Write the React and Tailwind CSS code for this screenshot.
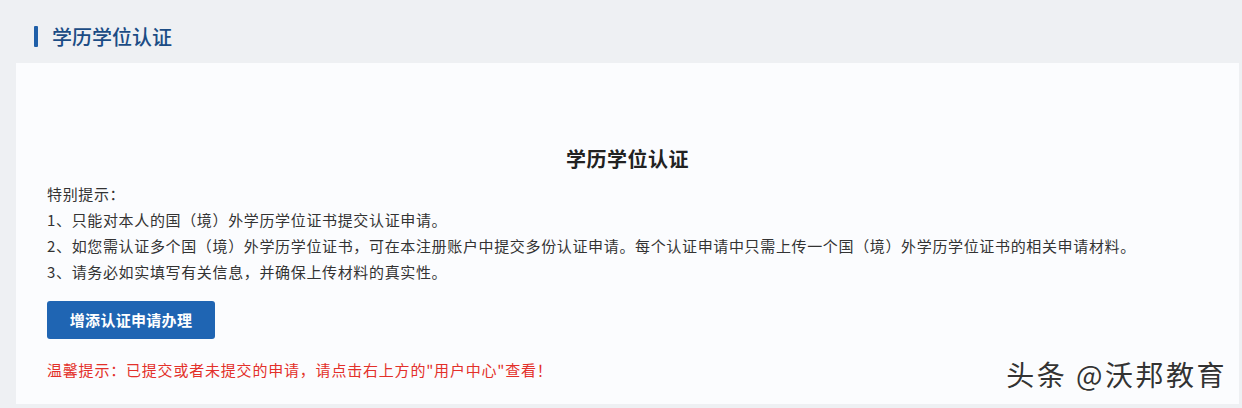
import React from "react";

const tips = [
  "1、只能对本人的国（境）外学历学位证书提交认证申请。",
  "2、如您需认证多个国（境）外学历学位证书，可在本注册账户中提交多份认证申请。每个认证申请中只需上传一个国（境）外学历学位证书的相关申请材料。",
  "3、请务必如实填写有关信息，并确保上传材料的真实性。",
];

export default function App() {
  return (
    <div
      className="w-[1242px] h-[408px] overflow-hidden bg-[#eef0f3] flex flex-col"
      style={{ fontFamily: '"Noto Sans CJK SC", "Noto Sans", sans-serif' }}
    >
      {/* header */}
      <div className="h-[63px] shrink-0 flex items-center pl-[34px] pt-[10px]">
        <div className="w-[4px] h-[21px] bg-[#1f5fa8] rounded-[1px]" />
        <div className="ml-[14px] text-[20px] leading-none font-medium text-[#1b4c85]">学历学位认证</div>
      </div>

      {/* card */}
      <div className="ml-[16px] w-[1223px] h-[341px] bg-[#fbfcfe] relative pt-[84px] pl-[31px]">
        <div className="absolute left-0 right-0 top-[83px] text-center text-[20px] leading-[26px] font-bold text-[#222] tracking-[0.5px]">
          学历学位认证
        </div>
        <div className="mt-[34px] text-[15px] leading-[26px] tracking-[0.65px] text-[#333]">
          <div>特别提示：</div>
          {tips.map((t) => (
            <div key={t}>{t}</div>
          ))}
        </div>
        <button className="mt-[16px] w-[168px] h-[38px] rounded-[3px] bg-[#1f65b3] text-white text-[15px] font-bold tracking-[0.3px]">
          增添认证申请办理
        </button>
        <div className="mt-[18px] text-[15px] leading-[26px] tracking-[0.8px] text-[#e3302a]">
          温馨提示：已提交或者未提交的申请，请点击右上方的"用户中心"查看！
        </div>

        {/* watermark */}
        <div
          className="absolute right-[12px] top-[293px] text-[28px] leading-[36px] text-[#333] tracking-[2.5px]"
          style={{ textShadow: "1px 1px 0 #fff, -1px -1px 0 #fff" }}
        >
          头条 @沃邦教育
        </div>
      </div>
    </div>
  );
}
